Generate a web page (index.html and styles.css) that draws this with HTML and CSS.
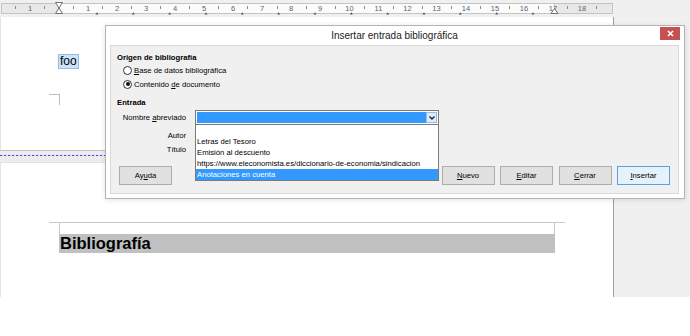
FILE: index.html
```html
<!DOCTYPE html>
<html lang="es">
<head>
  <meta charset="UTF-8">
  <title>Insertar entrada bibliográfica</title>
  <link rel="stylesheet" href="styles.css">
</head>
<body>

<div class="app">
  <svg class="ruler" width="690" height="17" viewBox="0 0 690 17">
    <rect x="0" y="0" width="690" height="17" fill="#f0f0f0"/>
    <rect x="1.5" y="3.5" width="611" height="10" fill="#fbfbfb" stroke="#c4c4c4"/>
    <rect x="1.5" y="3.5" width="57.5" height="10" fill="#e8e8e8" stroke="#c4c4c4"/>
    <rect x="554.5" y="3.5" width="58" height="10" fill="#e8e8e8" stroke="#c4c4c4"/>
    <path stroke="#8c8c8c" d="M15.5 6v3M44.5 6v3M73.5 6v3M102.5 6v3M131.5 6v3M160.5 6v3M189.5 6v3M218.5 6v3M247.5 6v3M277.5 6v3M306.5 6v3M335.5 6v3M364.5 6v3M393.5 6v3M422.5 6v3M451.5 6v3M480.5 6v3M509.5 6v3M538.5 6v3M567.5 6v3M596.5 6v3"/>
    <g class="ruler-num" text-anchor="middle">
      <text x="30" y="10.5">1</text>
      <text x="88" y="10.5">1</text>
      <text x="117" y="10.5">2</text>
      <text x="146" y="10.5">3</text>
      <text x="175" y="10.5">4</text>
      <text x="204" y="10.5">5</text>
      <text x="233" y="10.5">6</text>
      <text x="262" y="10.5">7</text>
      <text x="291" y="10.5">8</text>
      <text x="320" y="10.5">9</text>
      <text x="349.5" y="10.5">10</text>
      <text x="378.5" y="10.5">11</text>
      <text x="407.5" y="10.5">12</text>
      <text x="436.5" y="10.5">13</text>
      <text x="466" y="10.5">14</text>
      <text x="495" y="10.5">15</text>
      <text x="524" y="10.5">16</text>
      <text x="553" y="10.5">17</text>
      <text x="582" y="10.5">18</text>
    </g>
    <path fill="#555" d="M95.5 14.5l1.5-2.2 1.5 2.2zM131.8 14.5l1.5-2.2 1.5 2.2zM168.2 14.5l1.5-2.2 1.5 2.2zM204.5 14.5l1.5-2.2 1.5 2.2zM240.8 14.5l1.5-2.2 1.5 2.2zM277.2 14.5l1.5-2.2 1.5 2.2zM313.5 14.5l1.5-2.2 1.5 2.2zM349.8 14.5l1.5-2.2 1.5 2.2zM386.2 14.5l1.5-2.2 1.5 2.2zM422.5 14.5l1.5-2.2 1.5 2.2zM458.8 14.5l1.5-2.2 1.5 2.2zM495.2 14.5l1.5-2.2 1.5 2.2zM531.5 14.5l1.5-2.2 1.5 2.2z"/>
    <path fill="#fff" stroke="#6f6f6f" d="M55.5 2.5h7L59 8zM59 8l3.5 5.5h-7z"/>
    <path fill="#fff" stroke="#6f6f6f" d="M554.5 8.5l3.5 5h-7z"/>
  </svg>

  <div class="workspace">
    <div class="doc">
      <div class="page page-top">
        <span class="selected-text">foo</span>
        <div class="corner"></div>
      </div>
      <div class="page-break"><div class="break-line"></div></div>
      <div class="page page-bottom">
        <div class="text-bounds">
          <div class="bound-line"></div>
          <h1 class="index-heading">Bibliografía</h1>
        </div>
      </div>
    </div>
    <div class="sidebar"></div>
  </div>

  <div class="dialog">
    <div class="titlebar">
      Insertar entrada bibliográfica
      <span class="close-btn">
        <svg width="7" height="7" viewBox="0 0 7 7"><path d="M1 1l5 5M6 1L1 6" stroke="#fff" stroke-width="1.6"/></svg>
      </span>
    </div>

    <div class="panel">
      <div class="group-title first">Origen de bibliografía</div>
      <div class="radios">
        <label class="radio-row"><span class="radio"></span><span><u>B</u>ase de datos bibliográfica</span></label>
        <label class="radio-row"><span class="radio checked"></span><span>Contenido <u>d</u>e documento</span></label>
      </div>

      <div class="group-title">Entrada</div>
      <div class="entry-form">
        <div class="field-label">Nombre <u>a</u>breviado</div>
        <div class="combo">
          <div class="combo-value"></div>
          <div class="combo-btn">
            <svg width="6" height="4" viewBox="0 0 6 4"><path d="M0.5 0.5L3 3l2.5-2.5" fill="none" stroke="#222" stroke-width="1.4"/></svg>
          </div>
          <ul class="combo-list">
            <li></li>
            <li>Letras del Tesoro</li>
            <li>Emisión al descuento</li>
            <li>https://www.eleconomista.es/diccionario-de-economia/sindicacion</li>
            <li class="active">Anotaciones en cuenta</li>
          </ul>
        </div>

        <div class="field-label">Autor</div>
        <div class="text-field"></div>

        <div class="field-label">Título</div>
        <div class="text-field"></div>
      </div>

      <div class="buttons">
        <button class="btn">Ay<u>u</u>da</button>
        <div class="btn-group">
          <button class="btn"><u>N</u>uevo</button>
          <button class="btn"><u>E</u>ditar</button>
          <button class="btn"><u>C</u>errar</button>
          <button class="btn btn-default"><u>I</u>nsertar</button>
        </div>
      </div>
    </div>
  </div>
</div>

</body>
</html>
```

FILE: styles.css
```css
body {
  margin: 0;
  background: #fff;
  font-family: "Liberation Sans", Arial, sans-serif;
}

.app {
  position: relative;
  width: 690px;
  height: 336px;
  overflow: hidden;
}

.ruler {
  display: block;
}

.ruler-num {
  font-family: "Liberation Sans", Arial, sans-serif;
  font-size: 7.5px;
  fill: #56647a;
}

.workspace {
  display: flex;
  height: 280px;
}

.doc {
  width: 613px;
  display: flex;
  flex-direction: column;
}

.page {
  background: #fff;
  border-left: 1px solid #e4e4e4;
}

.page-top {
  height: 133px;
  box-sizing: border-box;
  padding: 34px 0 0 48px;
}

.selected-text {
  display: inline-block;
  margin-left: 9px;
  padding: 0 1px;
  font-size: 12px;
  line-height: 13px;
  color: #000;
  background: #cce4f7;
  border: 1px solid #8fbde6;
}

.corner {
  width: 10px;
  height: 10px;
  margin-top: 25px;
  border-top: 1px solid #bdbdbd;
  border-right: 1px solid #bdbdbd;
}

.page-break {
  height: 13px;
  box-sizing: border-box;
  border-top: 1px solid #c2c2c2;
  border-bottom: 1px solid #e2e2e2;
  background: #ededed;
  padding-top: 4px;
}

.break-line {
  height: 1px;
  background: repeating-linear-gradient(to right, #3d3dff 0 2px, #c8c8f0 2px 3px, transparent 3px 4px);
}

.page-bottom {
  flex: 1;
  padding-top: 49px;
}

.text-bounds {
  margin-left: 58px;
  width: 494px;
  border-left: 1px solid #c8c8c8;
  border-right: 1px solid #c8c8c8;
}

.bound-line {
  height: 1px;
  margin: 10px -11px 0;
  background: #c8c8c8;
}

.index-heading {
  margin: 11px -1px 0;
  height: 19px;
  line-height: 19px;
  padding-left: 1px;
  background: #c0c0c0;
  font-size: 16.5px;
  font-weight: bold;
  color: #000;
}

.sidebar {
  flex: 1;
  background: #f0f0f0;
  border-left: 1px solid #9c9c9c;
}

/* dialog */
.dialog {
  position: absolute;
  left: 105px;
  top: 25px;
  width: 580px;
  height: 174px;
  box-sizing: border-box;
  display: flex;
  flex-direction: column;
  padding: 0 5px 4px 4px;
  background: #fff;
  border: 1px solid #b4b4b4;
  box-shadow: 0 1px 5px rgba(0,0,0,0.12);
  font-size: 7.7px;
  color: #000;
}

.titlebar {
  position: relative;
  height: 19px;
  line-height: 19px;
  text-align: center;
  font-size: 10px;
  color: #222;
}

.close-btn {
  position: absolute;
  right: -1px;
  top: 1px;
  width: 20px;
  height: 13px;
  background: #c75050;
  display: flex;
  align-items: center;
  justify-content: center;
}

.close-btn svg {
  display: block;
}

.panel {
  flex: 1;
  display: flex;
  flex-direction: column;
  background: #f0f0f0;
  border: 1px solid #d9d9d9;
}

.group-title {
  margin: 5.5px 0 0 6px;
  line-height: 11px;
  font-weight: bold;
}

.group-title.first {
  margin-top: 6px;
}

.radios {
  margin-top: 1px;
}

.radio-row {
  display: flex;
  align-items: center;
  gap: 2px;
  height: 13.5px;
  padding-left: 12px;
}

.radio {
  width: 7px;
  height: 7px;
  border: 1px solid #333;
  border-radius: 50%;
  background: #fff;
  display: flex;
  align-items: center;
  justify-content: center;
}

.radio.checked::after {
  content: "";
  width: 4px;
  height: 4px;
  border-radius: 50%;
  background: #111;
}

.entry-form {
  display: grid;
  grid-template-columns: 75px 244px;
  grid-template-rows: 15px 17.5px 14px;
  column-gap: 9px;
  margin-top: 2.5px;
}

.field-label {
  text-align: right;
  align-self: end;
  line-height: 14px;
}

.entry-form .field-label:first-child {
  align-self: center;
}

.combo {
  position: relative;
  display: flex;
  padding: 1px;
  border: 1px solid #7a7a7a;
  background: #fff;
  box-sizing: border-box;
}

.combo-value {
  flex: 1;
  background: #3399ff;
}

.combo-btn {
  width: 9px;
  border: 1px solid #8fbbe6;
  background: #dcecfc;
  display: flex;
  align-items: center;
  justify-content: center;
}

.combo-list {
  position: absolute;
  top: 100%;
  left: -1px;
  right: -1px;
  margin: 0;
  padding: 0;
  list-style: none;
  background: #fff;
  border: 1px solid #7a7a7a;
  z-index: 2;
}

.combo-list li {
  height: 11px;
  line-height: 11px;
  padding-left: 1px;
  white-space: nowrap;
  overflow: hidden;
}

.combo-list li.active {
  background: #3399ff;
  color: #fff;
}

.text-field {
  height: 14px;
  box-sizing: border-box;
  align-self: end;
  background: #fff;
  border: 1px solid #adadad;
}

.buttons {
  margin-top: auto;
  display: flex;
  justify-content: space-between;
  padding: 0 8px 8px;
}

.btn-group {
  display: flex;
  gap: 5.5px;
}

.btn {
  width: 53px;
  height: 19px;
  padding: 0;
  background: #e1e1e1;
  border: 1px solid #adadad;
  font-family: inherit;
  font-size: 7.7px;
  color: #000;
}

.btn-default {
  background: #e5f1fb;
  border-color: #5aa2e6;
}
```
